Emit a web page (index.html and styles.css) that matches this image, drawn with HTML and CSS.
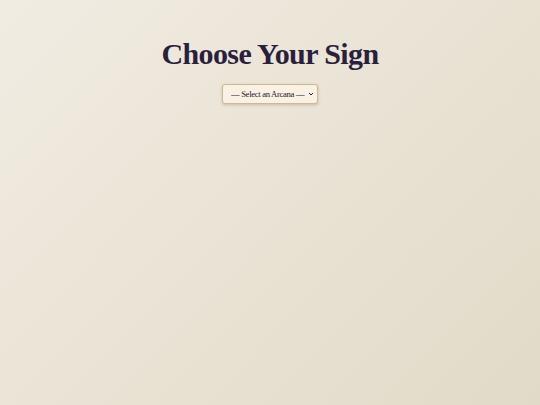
FILE: index.html
```html
<!DOCTYPE html>
<html>
<head>
<meta charset="utf-8">
<link rel="stylesheet" href="styles.css">
</head>
<body>
<main class="page">
  <h1 class="title">Choose Your Sign</h1>
  <div class="select-wrap">
    <select class="arcana">
      <option>— Select an Arcana —</option>
    </select>
    <svg class="chev" width="6" height="4" viewBox="0 0 6 4"><path d="M1 1 L3 3 L5 1" fill="none" stroke="#2a1f3d" stroke-width="1"/></svg>
  </div>
</main>
</body>
</html>
```
FILE: styles.css
```css
html, body {
  margin: 0;
  height: 100%;
}
body {
  background: linear-gradient(135deg, #f1ece2 0%, #e2dac8 100%);
  font-family: "Liberation Serif", "DejaVu Serif", serif;
}
.page {
  display: flex;
  flex-direction: column;
  align-items: center;
  padding-top: 36px;
}
.title {
  margin: 0;
  font-family: "Liberation Serif", serif;
  font-weight: 700;
  font-size: 30px;
  line-height: 36px;
  color: #2a1f3d;
  letter-spacing: -0.6px;
}
.select-wrap {
  position: relative;
  margin-top: 12px;
}
.arcana {
  display: block;
  appearance: none;
  -webkit-appearance: none;
  width: 96px;
  height: 20px;
  font-family: "Liberation Serif", serif;
  font-size: 8.6px;
  letter-spacing: -0.3px;
  color: #1f1a26;
  background: #f8f1e4;
  border: 1px solid #d2b88c;
  border-radius: 3px;
  box-shadow: 0 1px 3px rgba(120, 90, 50, 0.3);
  padding: 0 0 0 8px;
  margin: 0;
}
.chev {
  position: absolute;
  right: 4px;
  top: 8px;
  pointer-events: none;
}
```
